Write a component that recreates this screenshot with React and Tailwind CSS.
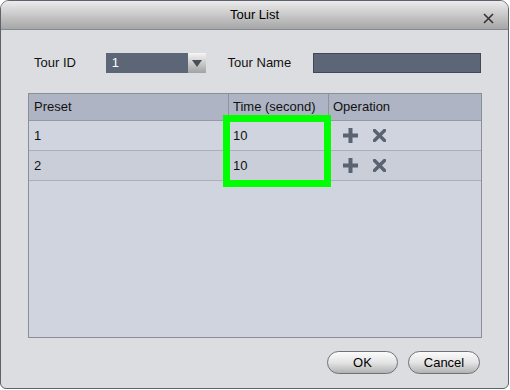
import React from "react";

const font = { fontFamily: '"Liberation Sans", Arial, sans-serif' };

function PlusIcon() {
  return (
    <svg width="15" height="15" viewBox="0 0 15 15">
      <rect x="5.5" y="0" width="4" height="15" fill="#5b6373" />
      <rect x="0" y="5.5" width="15" height="4" fill="#5b6373" />
    </svg>
  );
}

function XIcon() {
  return (
    <svg width="13" height="13" viewBox="0 0 13 13">
      <path d="M1.5 1.5 L11.5 11.5 M11.5 1.5 L1.5 11.5" stroke="#5b6373" strokeWidth="3.4" strokeLinecap="square" />
    </svg>
  );
}

function Row({ preset, time, dark }) {
  return (
    <div className={`flex h-[30px] border-b border-[#a9afbb] ${dark ? "bg-[#c9ced9]" : "bg-[#cfd4df]"}`}>
      <div className="w-[200px] pl-[5px] flex items-center">{preset}</div>
      <div className="w-[100px] pl-[4px] flex items-center">{time}</div>
      <div className="flex-1 pl-[14px] flex items-center gap-[15px]">
        <PlusIcon />
        <XIcon />
      </div>
    </div>
  );
}

export default function App() {
  return (
    <div className="relative w-[510px] h-[390px] bg-white text-[13px] text-[#111]" style={font}>
      <div className="w-[509px] h-[389px] flex flex-col border border-[#5d636e] rounded-t-[9px] rounded-b-[6px] overflow-hidden bg-[#dcdde0]">
        <div className="h-[29px] shrink-0 relative flex items-center justify-center border-b border-[#868a92] bg-gradient-to-b from-[#ececec] to-[#a6a6a6]">
          <span className="text-[13px] text-black">Tour List</span>
          <svg className="absolute right-[14px] top-[12px]" width="11" height="11" viewBox="0 0 11 11">
            <path d="M1 1 L10 10 M10 1 L1 10" stroke="#333" strokeWidth="1.6" />
          </svg>
        </div>
        <div className="flex-1 flex flex-col pl-[27px] pr-[27px] pt-[23px]">
          <div className="flex items-center h-[20px]">
            <span className="ml-[6px] w-[72px]">Tour ID</span>
            <div className="flex w-[100px] h-[20px] bg-[#5c6677]">
              <span className="flex-1 pl-[6px] text-white leading-[20px]">1</span>
              <div className="w-[18px] h-[20px] flex items-center justify-center bg-gradient-to-b from-[#f6f6f6] to-[#a2a2a2]">
                <svg width="10" height="7" viewBox="0 0 10 7">
                  <path d="M0 0 H10 L5 7 Z" fill="#48505c" />
                </svg>
              </div>
            </div>
            <span className="ml-[22px] w-[86px]">Tour Name</span>
            <div className="w-[168px] h-[20px] bg-[#5c6677] border border-[#404756]" />
          </div>
          <div className="mt-[20px] w-[454px] h-[245px] border border-[#8a8e96] bg-[#cfd4de] flex flex-col">
            <div className="flex h-[27px] bg-[#aeb4c3] border-b border-[#959ba6]">
              <div className="w-[200px] pl-[5px] flex items-center border-r border-[#8e939c]">Preset</div>
              <div className="w-[100px] pl-[4px] flex items-center border-r border-[#8e939c]">Time (second)</div>
              <div className="flex-1 pl-[4px] flex items-center">Operation</div>
            </div>
            <Row preset="1" time="10" />
            <Row preset="2" time="10" dark />
          </div>
          <div className="mt-[13px] flex justify-end gap-[10px] pr-[1px]">
            <button className="w-[71px] h-[23px] rounded-full border border-[#6e7278] bg-gradient-to-b from-[#fbfbfb] via-[#e4e4e4] to-[#b2b2b2] text-[13px] text-black" style={font}>OK</button>
            <button className="w-[72px] h-[23px] rounded-full border border-[#6e7278] bg-gradient-to-b from-[#fbfbfb] via-[#e4e4e4] to-[#b2b2b2] text-[13px] text-black" style={font}>Cancel</button>
          </div>
        </div>
      </div>
      <div className="absolute left-[223px] top-[115px] w-[108px] h-[72px] border-[7px] border-[#00ff00]" />
    </div>
  );
}
